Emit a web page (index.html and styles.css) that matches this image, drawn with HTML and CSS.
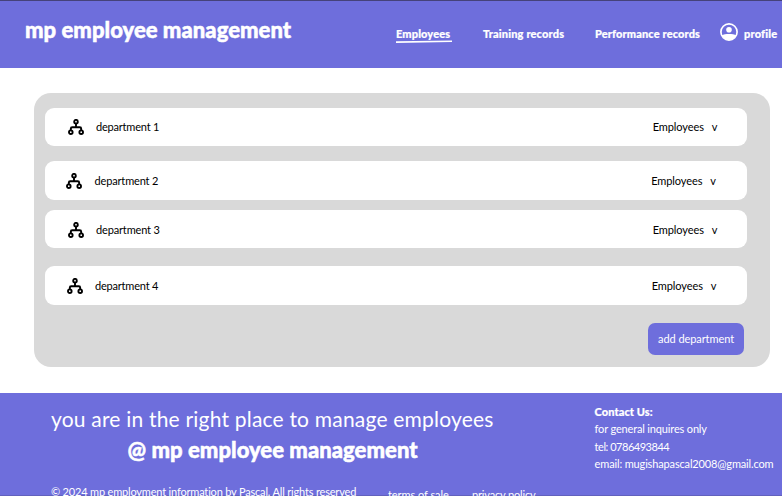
FILE: index.html
```html
<!DOCTYPE html>
<html lang="en">
<head>
<meta charset="utf-8">
<title>mp employee management</title>
<link rel="stylesheet" href="styles.css">
</head>
<body>
<svg class="defs" aria-hidden="true">
  <symbol id="tree" viewBox="0 0 16 16">
    <g fill="none" stroke="#000" stroke-width="1.9">
      <circle cx="8" cy="2.7" r="1.8"/>
      <circle cx="2.8" cy="13.2" r="1.8"/>
      <circle cx="13.2" cy="13.2" r="1.8"/>
      <path d="M8 4.6V8.2M2.8 11.3V9.7Q2.8 8.3 4.2 8.3H11.8Q13.2 8.3 13.2 9.7V11.3"/>
    </g>
  </symbol>
</svg>
<header class="header">
  <h1 class="brand">mp employee management</h1>
  <nav class="nav">
    <a class="link active">Employees<svg class="underline" viewBox="0 0 56 3"><path d="M0 2.1L56 1.3" stroke="#fff" stroke-width="1.6"/></svg></a>
    <a class="link training">Training records</a>
    <a class="link performance">Performance records</a>
    <a class="link profile">
      <svg class="avatar" viewBox="0 0 18 18"><circle cx="9" cy="9" r="8.1" fill="none" stroke="#fff" stroke-width="1.7"/><circle cx="9" cy="6.8" r="2.8" fill="#fff"/><path d="M1.7 12.3C5 10.6 13 10.6 16.3 12.3A8.1 8.1 0 0 1 1.7 12.3Z" fill="#fff"/></svg>
      <span>profile</span>
    </a>
  </nav>
</header>
<main class="panel">
  <section class="row"><svg class="tree"><use href="#tree"/></svg><span class="name">department 1</span><span class="staff">Employees</span><span class="caret">v</span></section>
  <section class="row second"><svg class="tree"><use href="#tree"/></svg><span class="name">department 2</span><span class="staff">Employees</span><span class="caret">v</span></section>
  <section class="row third"><svg class="tree"><use href="#tree"/></svg><span class="name">department 3</span><span class="staff">Employees</span><span class="caret">v</span></section>
  <section class="row fourth"><svg class="tree"><use href="#tree"/></svg><span class="name">department 4</span><span class="staff">Employees</span><span class="caret">v</span></section>
  <button class="add">add department</button>
</main>
<footer class="footer">
  <div class="about">
    <p class="slogan">you are in the right place to manage employees</p>
    <p class="signature">@ mp employee management</p>
    <div class="legal"><span class="copy">© 2024 mp employment information by Pascal. All rights reserved</span><span class="terms">terms of sale</span><span class="privacy">privacy policy</span></div>
  </div>
  <address class="contact">
    <strong>Contact Us:</strong>
    <span class="general">for general inquires only</span>
    <span class="tel">tel: 0786493844</span>
    <span class="email">email: mugishapascal2008@gmail.com</span>
  </address>
</footer>
</body>
</html>
```
FILE: styles.css
```css
* { box-sizing: border-box; }

html, body { height: 100%; }

body {
  margin: 0;
  display: flex;
  flex-direction: column;
  overflow: hidden;
  background: #fff;
  color: #000;
  font: 400 11px/18px Lato, sans-serif;
  white-space: nowrap;
}

h1, p { margin: 0; }

.defs { display: none; }

.header {
  flex: none;
  display: flex;
  justify-content: space-between;
  height: 67.7px;
  padding-left: 25px;
  border-top: 1px solid #45427a;
  background: #6e6edc;
  color: #fff;
}

.brand {
  padding-top: 14px;
  font-size: 22px;
  font-weight: 900;
  line-height: 30px;
  letter-spacing: 0.05px;
  -webkit-text-stroke: 0.5px #fff;
}

.nav {
  display: flex;
  width: 386px;
  padding-top: 24px;
  font-weight: 900;
  -webkit-text-stroke: 0.2px #fff;
}

.link { flex: none; letter-spacing: 0.13px; }
.active { position: relative; width: 87px; }
.training { width: 112px; letter-spacing: 0.16px; }
.performance { width: 125px; }
.profile { display: flex; gap: 6px; letter-spacing: 0.18px; }

.underline {
  position: absolute;
  left: 0;
  top: 15px;
  width: 56px;
  height: 3px;
}

.avatar { width: 18px; height: 18px; margin-top: -2px; }

.panel {
  flex: none;
  display: flex;
  flex-direction: column;
  width: 736px;
  height: 274.2px;
  margin: 25.6px 0 0 34px;
  padding: 14.5px 23.5px 0 11.3px;
  border-radius: 17px;
  background: #d9d9d9;
}

.row {
  flex: none;
  display: flex;
  align-items: center;
  height: 38.5px;
  padding: 0 29px 0 22.7px;
  border-radius: 9px;
  background: #fff;
}

.second { margin-top: 15.2px; padding: 0 30.5px 0 21.2px; }
.third { margin-top: 9.7px; padding-top: 1.4px; }
.fourth { margin-top: 18.2px; padding: 0 30px 0 21.7px; }

.tree { width: 16px; height: 16px; margin-right: 12px; }
.name { letter-spacing: -0.2px; }
.second .name, .third .name { letter-spacing: -0.15px; }
.staff { margin-left: auto; letter-spacing: -0.1px; }
.caret { margin-left: 8px; }

.add {
  flex: none;
  align-self: flex-end;
  width: 95.7px;
  height: 32.3px;
  margin: 18px 2.6px 0 0;
  padding: 0;
  border: 0;
  border-radius: 7px;
  background: #6e6edc;
  color: #fff;
  font: inherit;
  letter-spacing: -0.08px;
}

.footer {
  flex: 1;
  display: flex;
  justify-content: space-between;
  min-height: 0;
  margin-top: 25.8px;
  padding-left: 51px;
  overflow: hidden;
  background: #6e6edc;
  box-shadow: inset 0 -1px #6261bd;
  color: #fff;
}

.slogan {
  padding-top: 11px;
  font-size: 21px;
  line-height: 30px;
  letter-spacing: 0.2px;
}

.signature {
  padding-left: 76.5px;
  font-size: 22px;
  font-weight: 900;
  line-height: 32px;
  letter-spacing: 0.05px;
  -webkit-text-stroke: 0.5px #fff;
}

.legal { display: flex; padding-top: 17px; }
.copy { width: 337px; letter-spacing: -0.18px; }
.terms { width: 84px; padding-top: 3px; letter-spacing: -0.06px; }
.privacy { padding-top: 3px; letter-spacing: -0.16px; }

.contact {
  display: flex;
  flex-direction: column;
  width: 187.4px;
  padding-top: 9.5px;
  font-style: normal;
  line-height: 17.4px;
}

.contact strong { font-weight: 900; letter-spacing: 0.08px; -webkit-text-stroke: 0.2px #fff; }
.general { letter-spacing: -0.16px; }
.tel { letter-spacing: -0.47px; }
.email { letter-spacing: -0.15px; }
```
